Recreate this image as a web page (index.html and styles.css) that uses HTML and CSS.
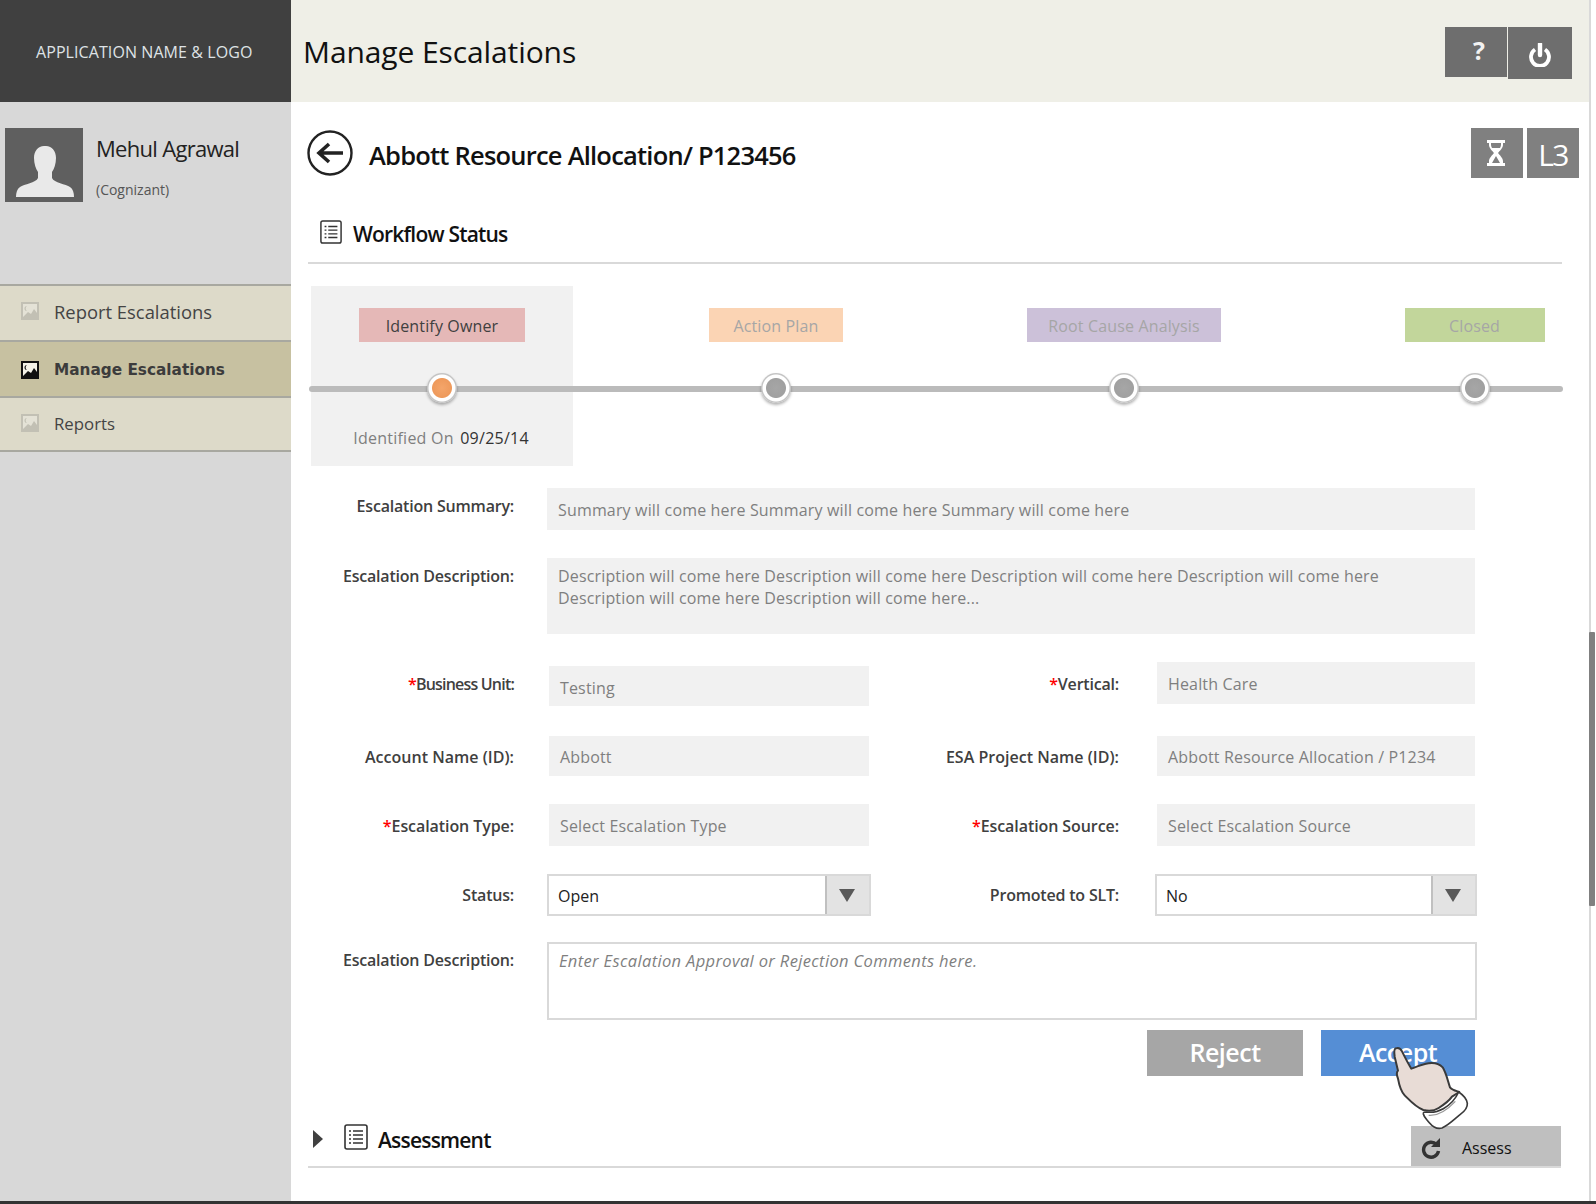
FILE: index.html
```html
<!DOCTYPE html>
<html lang="en">
  <head>
    <meta charset="UTF-8" />
    <title>Manage Escalations</title>
    <link rel="stylesheet" href="styles.css">
  </head>
  <body>
    <div class="shell">
      <aside class="sidebar">
        <div class="logo">APPLICATION NAME &amp; LOGO</div>
        <div class="profile">
          <svg class="avatar" viewBox="0 0 78 74">
            <rect width="78" height="74" fill="#5f5f5f" />
            <path fill="#e9e9e9" d="M39 18c-6 0-10 5-10 12 0 6 2 11 4 14v6c-2 5-14 6-18 9-3 2-4 6-4 10h58c0-4-1-8-4-10-4-3-16-4-18-9v-6c2-3 4-8 4-14 0-7-4-12-10-12z" />
          </svg>
          <div>
            <div class="profile-name">Mehul Agrawal</div>
            <div class="profile-org">(Cognizant)</div>
          </div>
        </div>
        <nav class="nav">
          <a class="nav-item">
            <svg class="nav-icon" viewBox="0 0 18 18"><path fill="#c2c0b4" d="M0 0h18v18H0z" /><path fill="#e4e2d6" d="M2 2h14v14H2z" /><path fill="#c2c0b4" d="M2 15l5-5 3 2 3-5 3 4v5H2zM6 4a2.500 2.500 0 1 0 0 5 3 3 0 0 1 0-5z" /></svg>
            Report Escalations
          </a>
          <a class="nav-item nav-item-active">
            <svg class="nav-icon" viewBox="0 0 18 18"><path fill="#111" d="M0 0h18v18H0z" /><path fill="#f4f2e8" d="M2 2h14v14H2z" /><path fill="#111" d="M2 15l5-5 3 2 3-5 3 4v5H2zM6 4a2.500 2.500 0 1 0 0 5 3 3 0 0 1 0-5z" /></svg>
            Manage Escalations
          </a>
          <a class="nav-item nav-item-small">
            <svg class="nav-icon" viewBox="0 0 18 18"><path fill="#c2c0b4" d="M0 0h18v18H0z" /><path fill="#e4e2d6" d="M2 2h14v14H2z" /><path fill="#c2c0b4" d="M2 15l5-5 3 2 3-5 3 4v5H2zM6 4a2.500 2.500 0 1 0 0 5 3 3 0 0 1 0-5z" /></svg>
            Reports
          </a>
        </nav>
      </aside>

      <div class="content">
        <header class="topbar">
          <h1>Manage Escalations</h1>
          <div class="topbar-actions">
            <button class="top-btn top-btn-help">?</button>
            <button class="top-btn top-btn-power" aria-label="power">
              <svg viewBox="0 0 24 24" width="24" height="24">
                <path d="M7 6.500a9 9 0 1 0 10 0" fill="none" stroke="#fff" stroke-width="3.800" />
                <path d="M12 1v11" stroke="#fff" stroke-width="4.400" stroke-linecap="round" />
              </svg>
            </button>
          </div>
        </header>

        <main class="main">
          <div class="title-row">
            <svg class="back" viewBox="0 0 46 46">
              <circle cx="23" cy="23" r="21.500" fill="none" stroke="#222" stroke-width="2.400" />
              <path d="M36 23H13M22 14l-10 9 10 9" fill="none" stroke="#222" stroke-width="3.600" />
            </svg>
            <h2>Abbott Resource Allocation/ P123456</h2>
            <div class="badges">
              <div class="badge badge-icon">
                <svg viewBox="0 0 18 26" width="18" height="26">
                  <path fill="#fff" d="M0 0h18v3h-2v2c0 3-3.500 6-5 8 1.500 2 5 5 5 8v2h2v3H0v-3h2v-2c0-3 3.500-6 5-8-1.500-2-5-5-5-8V3H0z" />
                  <path fill="#808080" d="M4 3h10v2c0 1-.500 2-1 3H5C4.500 7 4 6 4 5zM9 16l-4 7h8z" />
                </svg>
              </div>
              <div class="badge">L3</div>
            </div>
          </div>

          <div class="section-head">
            <svg class="list-icon" viewBox="0 0 24 26">
              <rect x="1" y="1" width="22" height="24" rx="2" fill="none" stroke="#333" stroke-width="1.600" />
              <path d="M5 7h2M5 11h2M5 15h2M5 19h2M9 7h10M9 11h10M9 15h10M9 19h10" stroke="#333" stroke-width="1.400" />
            </svg>
            <h3>Workflow Status</h3>
          </div>

          <div class="workflow">
            <div class="track"></div>
            <div class="stage stage-current">
              <div class="tag tag-red">Identify Owner</div>
              <div class="dot dot-orange"></div>
              <div class="stage-note">Identified On <b>09/25/14</b></div>
            </div>
            <div class="stage">
              <div class="tag tag-peach">Action Plan</div>
              <div class="dot"></div>
            </div>
            <div class="stage">
              <div class="tag tag-purple">Root Cause Analysis</div>
              <div class="dot"></div>
            </div>
            <div class="stage stage-last">
              <div class="tag tag-green">Closed</div>
              <div class="dot"></div>
            </div>
          </div>

          <form class="form">
            <div class="row row-summary">
              <label class="lbl">Escalation Summary:</label>
              <div class="field field-summary">Summary will come here Summary will come here Summary will come here</div>
            </div>
            <div class="row row-desc">
              <label class="lbl">Escalation Description:</label>
              <div class="field field-desc">Description will come here Description will come here Description will come here Description will come here<br />Description will come here Description will come here...</div>
            </div>

            <div class="pair pair-unit">
              <label class="lbl lbl-tight"><i>*</i>Business Unit:</label>
              <div class="field field-left field-unit">Testing</div>
              <label class="lbl"><i>*</i>Vertical:</label>
              <div class="field field-right field-tall">Health Care</div>
            </div>
            <div class="pair pair-account">
              <label class="lbl lbl-wide">Account Name (ID):</label>
              <div class="field field-left">Abbott</div>
              <label class="lbl lbl-wide">ESA Project Name (ID):</label>
              <div class="field field-right">Abbott Resource Allocation / P1234</div>
            </div>
            <div class="pair pair-type">
              <label class="lbl lbl-mid"><i>*</i>Escalation Type:</label>
              <div class="field field-left field-tall">Select Escalation Type</div>
              <label class="lbl lbl-mid"><i>*</i>Escalation Source:</label>
              <div class="field field-right field-tall">Select Escalation Source</div>
            </div>
            <div class="pair pair-status">
              <label class="lbl">Status:</label>
              <div class="select select-left"><span>Open</span><div class="select-arrow"></div></div>
              <label class="lbl">Promoted to SLT:</label>
              <div class="select select-right"><span>No</span><div class="select-arrow"></div></div>
            </div>
            <div class="row row-comment">
              <label class="lbl">Escalation Description:</label>
              <div class="comment">Enter Escalation Approval or Rejection Comments here.</div>
            </div>
            <div class="form-actions">
              <button type="button" class="btn btn-reject">Reject</button>
              <button type="button" class="btn btn-accept">Accept</button>
            </div>
          </form>

          <div class="assessment">
            <div class="caret"></div>
            <svg class="list-icon list-icon-lg" viewBox="0 0 24 26">
              <rect x="1" y="1" width="22" height="24" rx="2" fill="none" stroke="#333" stroke-width="1.600" />
              <path d="M5 7h2M5 11h2M5 15h2M5 19h2M9 7h10M9 11h10M9 15h10M9 19h10" stroke="#333" stroke-width="1.400" />
            </svg>
            <h3>Assessment</h3>
            <div class="assess">
              <svg viewBox="0 0 20 22" width="20" height="22">
                <path d="M15.500 7.500a7.500 7.500 0 1 0 2 6.500" fill="none" stroke="#333" stroke-width="3.400" />
                <path d="M19 1v9h-9z" fill="#333" />
              </svg>
              <span>Assess</span>
            </div>
          </div>
        </main>

        <svg class="hand" viewBox="0 0 360 330">
          <path fill="#e8dcd6" stroke="#3a3a3a" stroke-width="6" stroke-linejoin="round" d="M78 55C72 56 72 66 74 80L84 122C80 126 80 136 84 146 88 168 92 184 104 196 120 212 138 232 160 240 176 244 194 242 206 234 222 224 236 214 246 200L268 186C256 182 246 180 240 172 234 156 230 132 218 112 206 100 190 98 176 100 160 102 140 110 124 116 114 100 104 80 96 64 92 56 84 53 78 55Z" />
          <path fill="#fff" stroke="#3a3a3a" stroke-width="5" stroke-linejoin="round" d="M266 186c12 8 24 20 26 34 1 14-8 24-22 34-16 12-32 30-54 40-14 4-28-4-38-16-8-10-16-16-18-26-1-6 4-6 10-6 14 2 36-2 50-10 18-10 36-28 46-50z" />
          <path fill="none" stroke="#999" stroke-width="4" d="M176 256c24 2 54-14 80-42" />
        </svg>
      </div>

      <div class="scroll">
        <div class="scroll-thumb"></div>
      </div>
    </div>
    <div class="page-edge"></div>
  </body>
</html>
```

FILE: styles.css
```css
* {
  box-sizing: border-box;
}
html,
body {
  margin: 0;
  height: 1204px;
  overflow: hidden;
  background: #fff;
  font-family: "Open Sans", sans-serif;
  color: #404040;
}
h1,
h2,
h3 {
  margin: 0;
}
.shell {
  display: grid;
  grid-template-columns: 291px 1298px 7px;
  height: 1201px;
}
.page-edge {
  height: 3px;
  background: #333;
}

/* sidebar */
.sidebar {
  background: #d8d8d8;
}
.logo {
  height: 102px;
  background: #404040;
  color: #dfe3e6;
  font-size: 16px;
  line-height: 104px;
  padding-left: 36px;
  letter-spacing: 0.08px;
}
.profile {
  display: flex;
  padding: 26px 0 0 5px;
  height: 182px;
}
.avatar {
  width: 78px;
  height: 74px;
}
.profile-name {
  margin: 5px 0 0 13px;
  font-size: 22px;
  line-height: 30px;
  color: #222;
  letter-spacing: -0.7px;
}
.profile-org {
  margin: 18px 0 0 13px;
  font-size: 14px;
  line-height: 18px;
  color: #555;
}
.nav-item {
  display: flex;
  align-items: center;
  gap: 15px;
  height: 56px;
  padding: 0 0 4px 21px;
  background: #dddac9;
  border-top: 2px solid #a8a8a0;
  font-size: 18.400px;
  color: #444;
}
.nav-item-small {
  height: 56px;
  padding-bottom: 2px;
  border-bottom: 2px solid #a8a8a0;
  font-size: 16.800px;
}
.nav-item-active {
  padding: 2px 0 0 21px;
  background: #c7c1a1;
  font-family: "DejaVu Sans", sans-serif;
  font-weight: bold;
  font-size: 15.300px;
  color: #3c3c3c;
}
.nav-icon {
  width: 18px;
  height: 18px;
  flex: none;
}

/* top bar */
.topbar {
  display: flex;
  align-items: flex-start;
  height: 102px;
  background: #efefe7;
  padding-left: 12px;
}
.topbar h1 {
  font-size: 30px;
  font-weight: 400;
  line-height: 104px;
  color: #111;
  letter-spacing: -0.1px;
}
.topbar-actions {
  display: flex;
  gap: 1px;
  margin: 27px 17px 0 auto;
}
.top-btn {
  border: none;
  padding: 0;
  background: #6e6e6e;
  color: #f2f2f2;
}
.top-btn-help {
  width: 62px;
  height: 50px;
  font-family: "Open Sans", sans-serif;
  font-weight: bold;
  font-size: 25px;
  line-height: 46px;
  padding: 0 0 6px 6px;
}
.top-btn-power {
  width: 64px;
  height: 52px;
  padding-top: 3px;
}
.top-btn-power svg {
  display: block;
  margin: 0 auto;
}

/* main */
.main {
  padding-left: 17px;
}
.title-row {
  display: flex;
  align-items: flex-start;
  height: 108px;
  padding-top: 26px;
}
.back {
  width: 46px;
  height: 46px;
  margin: 2px 0 0 -1px;
}
.title-row h2 {
  margin-left: 16px;
  font-size: 25.500px;
  font-weight: 600;
  line-height: 54px;
  color: #111;
  letter-spacing: -0.78px;
}
.badges {
  display: flex;
  gap: 4px;
  margin-left: auto;
  margin-right: 10px;
}
.badge {
  display: flex;
  align-items: center;
  justify-content: center;
  width: 52px;
  height: 50px;
  padding-top: 2px;
  background: #808080;
  color: #fff;
  font-size: 30px;
  letter-spacing: -1.600px;
}
.badge-icon {
  padding: 0 2px 0 0;
}
.section-head {
  display: flex;
  align-items: center;
  gap: 11px;
  height: 54px;
  width: 1254px;
  padding: 0 0 4px 12px;
  border-bottom: 2px solid #d9d9d9;
}
.section-head .list-icon {
  margin-bottom: 4px;
}
.list-icon {
  width: 22px;
  height: 24px;
}
.section-head h3,
.assessment h3 {
  font-size: 21px;
  font-weight: 600;
  color: #111;
  letter-spacing: -0.8px;
}

/* workflow */
.workflow {
  position: relative;
  display: grid;
  grid-template-columns: 264px 406px 290px 294px;
  width: 1254px;
  height: 180px;
  margin: 22px 0 0 1px;
}
.track {
  position: absolute;
  left: 0;
  right: 0;
  top: 100px;
  height: 6px;
  border-radius: 3px;
  background: #bbb;
}
.stage {
  display: flex;
  flex-direction: column;
  align-items: center;
  padding-top: 22px;
}
.stage-current {
  background: #f1f1f1;
  margin-left: 2px;
}
.stage-last {
  padding-left: 117px;
}
.tag {
  height: 34px;
  font-size: 16px;
  line-height: 37px;
  letter-spacing: 0.15px;
  text-align: center;
  white-space: nowrap;
}
.tag-red {
  width: 166px;
  background: #e5b8b7;
  color: #404040;
}
.tag-peach {
  width: 134px;
  background: #fbd4b4;
  color: #a6a6a6;
}
.tag-purple {
  width: 194px;
  background: #ccc1d9;
  color: #a6a6a6;
}
.tag-green {
  width: 140px;
  background: #c2d69b;
  color: #a6a6a6;
}
.dot {
  position: relative;
  width: 30px;
  height: 30px;
  margin-top: 31px;
  border-radius: 50%;
  background: radial-gradient(circle, #a6a6a6 0, #a0a0a0 9.500px, #fff 10.500px, #fff 13px, #c4c4c4 14px);
  box-shadow: 0 2px 3px rgba(0, 0, 0, 0.3);
}
.dot-orange {
  background: radial-gradient(circle, #f4a56a 0, #ee9a5c 9.500px, #fff 10.500px, #fff 13px, #c4c4c4 14px);
}
.stage-note {
  margin-top: 23px;
  padding-right: 2px;
  font-size: 16px;
  line-height: 24px;
  letter-spacing: 0.25px;
  color: #7f7f7f;
  white-space: nowrap;
}
.stage-note b {
  margin-left: 2px;
  font-weight: 400;
  color: #333;
}

/* form */
.form {
  font-size: 16px;
}
.row {
  display: grid;
  grid-template-columns: 206px 928px;
  column-gap: 33px;
  align-items: start;
}
.row-summary {
  margin-top: 22px;
}
.row-desc {
  margin-top: 28px;
}
.pair {
  display: grid;
  grid-template-columns: 206px 355px 250px 356px;
  align-items: start;
}
.pair-unit {
  margin-top: 28px;
}
.pair-account {
  margin-top: 30px;
}
.pair-type {
  margin-top: 28px;
}
.pair-status {
  margin-top: 28px;
}
.row-comment {
  margin-top: 26px;
}
.lbl {
  display: block;
  text-align: right;
  font-weight: 600;
  font-size: 16px;
  color: #404040;
  letter-spacing: -0.2px;
  white-space: nowrap;
}
.lbl-tight {
  letter-spacing: -0.8px;
}
.lbl-wide {
  letter-spacing: 0.02px;
}
.lbl-mid {
  letter-spacing: -0.08px;
}
.lbl i {
  font-style: normal;
  color: #f00;
}
.row-summary .lbl {
  padding-top: 7px;
}
.row-desc .lbl {
  padding-top: 7px;
}
.pair-unit .lbl {
  padding-top: 11px;
}
.pair-account .lbl {
  padding-top: 10px;
}
.pair-type .lbl {
  padding-top: 11px;
}
.pair-status .lbl {
  padding-top: 10px;
}
.row-comment .lbl {
  padding-top: 7px;
}
.field {
  background: #f1f1f1;
  color: #7f7f7f;
  height: 40px;
  line-height: 42px;
  padding-left: 11px;
  letter-spacing: 0.16px;
  white-space: nowrap;
}
.field-summary {
  height: 42px;
  line-height: 44px;
}
.field-desc {
  height: 76px;
  line-height: 22px;
  padding-top: 7px;
}
.field-tall {
  height: 42px;
  line-height: 44px;
}
.field-left {
  margin-left: 35px;
  width: 320px;
}
.field-right {
  margin-left: 38px;
  width: 318px;
}
.field-unit {
  margin-top: 4px;
  line-height: 44px;
}
.select {
  display: flex;
  height: 42px;
  background: #fff;
  border: 2px solid #d9d9d9;
  color: #222;
  line-height: 40px;
}
.select span {
  flex: 1;
  padding-left: 9px;
}
.select-left {
  margin-left: 33px;
  width: 324px;
}
.select-right {
  margin-left: 36px;
  width: 322px;
}
.select-arrow {
  position: relative;
  width: 44px;
  background: #e3e3e3;
  border-left: 2px solid #c0c0c0;
}
.select-arrow::after {
  content: "";
  position: absolute;
  left: 12px;
  top: 13px;
  border-left: 8px solid transparent;
  border-right: 8px solid transparent;
  border-top: 13px solid #595959;
}
.comment {
  width: 930px;
  height: 78px;
  border: 2px solid #d9d9d9;
  padding-left: 10px;
  font-style: italic;
  font-size: 16.500px;
  letter-spacing: 0.35px;
  line-height: 34px;
  color: #7f7f7f;
}
.form-actions {
  display: flex;
  justify-content: flex-end;
  gap: 18px;
  width: 1167px;
  margin-top: 10px;
}
.btn {
  height: 46px;
  border: none;
  padding: 0 0 2px;
  color: #fff;
  font-family: "Open Sans", sans-serif;
  font-size: 25px;
  font-weight: 600;
  letter-spacing: -0.5px;
}
.btn-reject {
  width: 156px;
  background: #a6a6a6;
}
.btn-accept {
  width: 154px;
  background: #558ed5;
}

/* assessment */
.assessment {
  display: flex;
  align-items: center;
  width: 1253px;
  height: 92px;
  padding-top: 36px;
  border-bottom: 2px solid #d9d9d9;
}
.assessment h3 {
  padding-top: 2px;
}
.caret {
  margin: 0 0 0 5px;
  border-top: 9px solid transparent;
  border-bottom: 9px solid transparent;
  border-left: 10px solid #404040;
}
.list-icon-lg {
  width: 24px;
  height: 26px;
  margin: 0 10px 4px 21px;
}
.assess {
  display: flex;
  align-items: center;
  width: 150px;
  height: 40px;
  margin-left: auto;
  padding: 4px 0 0 10px;
  background: #bfbfbf;
  color: #111;
  font-size: 16px;
  align-self: flex-end;
}
.assess span {
  margin-left: 21px;
}

/* pointer hand over the accept button */
.content {
  position: relative;
}
.hand {
  position: absolute;
  left: 1079px;
  top: 1030px;
  width: 120px;
  height: 110px;
}

/* scrollbar */
.scroll {
  position: relative;
}
.scroll::before {
  content: "";
  position: absolute;
  left: 0;
  top: 0;
  bottom: 0;
  width: 2px;
  background: #d9d9d9;
}
.scroll-thumb {
  position: absolute;
  left: 0;
  top: 632px;
  width: 6px;
  height: 274px;
  border-radius: 1px;
  background: #808080;
}
```
